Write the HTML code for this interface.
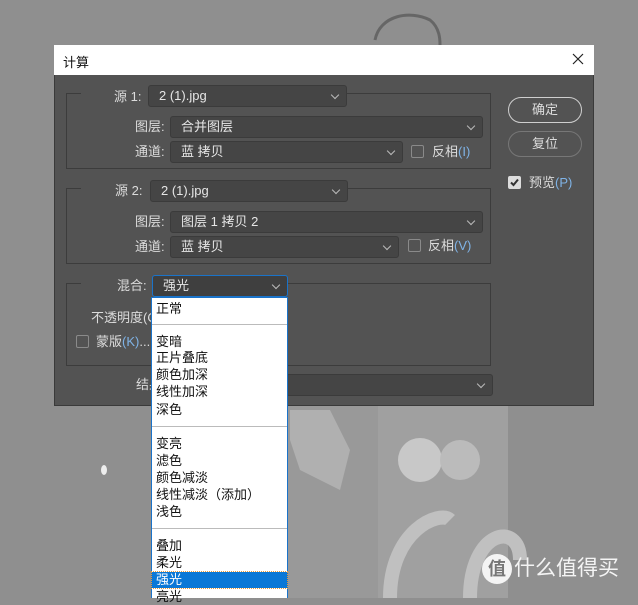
<!DOCTYPE html>
<html><head><meta charset="utf-8"><style>
*{margin:0;padding:0;box-sizing:border-box}
body{width:638px;height:598px;overflow:hidden;background:#8f8f8f;position:relative;font-family:"Liberation Sans","Noto Sans CJK SC",sans-serif;font-size:13px;color:#dcdcdc}
.a{position:absolute}
.dlg{left:54px;top:45px;width:540px;height:361px;background:#535353;border:1px solid #3a3a3a}
.tb{left:54px;top:45px;width:540px;height:30px;background:#fff;color:#111}
.sel{position:absolute;height:22px;background:#454545;border:1px solid #3b3b3b;border-radius:3px;padding-left:10px;line-height:20px;color:#e6e6e6}
.sel:after{content:"";position:absolute;right:8px;top:6px;width:5px;height:5px;border-right:1px solid #bbb;border-bottom:1px solid #bbb;transform:rotate(45deg)}
.grp{position:absolute;border:1px solid #3c3c3c}
.lbl{position:absolute;line-height:16px}
.cb{position:absolute;width:13px;height:13px;border:1px solid #8a8a8a;border-radius:2px}
.btn{position:absolute;width:74px;height:26px;border-radius:13px;text-align:center;line-height:23px}
.b{color:#7fb3e6}
.list{left:151px;top:297px;width:137px;height:301px;background:#fff;border:1px solid #1a73c9;border-bottom:none;color:#111}
.it{position:absolute;left:4px;line-height:16px}
.sp{position:absolute;left:0;width:135px;height:1px;background:#bbb}
</style></head><body>
<svg class="a" style="left:0;top:0" width="638" height="598">
<path d="M375 40 C380 15 410 10 430 20 440 28 440 40 440 45" stroke="#666" stroke-width="3" fill="none"/>
<rect x="288" y="406" width="110" height="192" fill="#999"/>
<rect x="378" y="406" width="130" height="192" fill="#a0a0a0"/>
<path d="M290 410 L330 410 350 450 340 490 300 470 290 440Z" fill="#b0b0b0"/>
<circle cx="420" cy="460" r="22" fill="#c8c8c8"/>
<circle cx="460" cy="460" r="20" fill="#bbb"/>
<path d="M390 598 C390 530 440 510 450 520" stroke="#c0c0c0" stroke-width="14" fill="none"/>
<path d="M470 598 C470 530 520 520 520 560" stroke="#c0c0c0" stroke-width="14" fill="none"/>
<ellipse cx="104" cy="470" rx="3" ry="5" fill="#eee"/>
<circle cx="497" cy="569" r="15" fill="#f4f4f4"/>
</svg>
<div class="a" style="left:488px;top:558px;font-size:18px;line-height:22px;color:#777;font-weight:bold">值</div>
<div class="a" style="left:514px;top:557px;font-size:21px;line-height:24px;color:#f4f4f4">什么值得买</div>
<div class="a dlg"></div>
<div class="a tb"><span class="a" style="left:9px;top:7px">计算</span>
<svg class="a" style="left:517px;top:7px" width="14" height="14"><path d="M2 2L12 12M12 2L2 12" stroke="#222" stroke-width="1.2"/></svg></div>
<div class="grp" style="left:66px;top:93px;width:425px;height:76px"></div>
<div class="a" style="left:81px;top:88px;width:264px;height:10px;background:#535353"></div>
<div class="lbl" style="left:114px;top:89px">源 1:</div>
<div class="sel" style="left:148px;top:85px;width:199px">2 (1).jpg</div>
<div class="lbl" style="left:135px;top:119px">图层:</div>
<div class="sel" style="left:170px;top:116px;width:313px">合并图层</div>
<div class="lbl" style="left:135px;top:144px">通道:</div>
<div class="sel" style="left:170px;top:141px;width:233px">蓝 拷贝</div>
<div class="cb" style="left:411px;top:145px"></div>
<div class="lbl" style="left:432px;top:144px">反相<span class="b">(I)</span></div>
<div class="grp" style="left:66px;top:188px;width:425px;height:76px"></div>
<div class="a" style="left:81px;top:183px;width:267px;height:10px;background:#535353"></div>
<div class="lbl" style="left:115px;top:183px">源 2:</div>
<div class="sel" style="left:150px;top:180px;width:198px">2 (1).jpg</div>
<div class="lbl" style="left:135px;top:214px">图层:</div>
<div class="sel" style="left:170px;top:211px;width:313px">图层 1 拷贝 2</div>
<div class="lbl" style="left:135px;top:239px">通道:</div>
<div class="sel" style="left:170px;top:236px;width:229px">蓝 拷贝</div>
<div class="cb" style="left:408px;top:239px"></div>
<div class="lbl" style="left:428px;top:238px">反相<span class="b">(V)</span></div>
<div class="grp" style="left:66px;top:283px;width:425px;height:83px"></div>
<div class="a" style="left:81px;top:278px;width:207px;height:10px;background:#535353"></div>
<div class="lbl" style="left:117px;top:278px">混合:</div>
<div class="sel" style="left:152px;top:275px;width:136px;border-color:#1a73c9;background:#3f3f3f">强光</div>
<div class="lbl" style="left:91px;top:310px">不透明度(O</div>
<div class="cb" style="left:76px;top:335px"></div>
<div class="lbl" style="left:96px;top:334px">蒙版<span class="b">(K)</span>...</div>
<div class="lbl" style="left:136px;top:377px">结果</div>
<div class="sel" style="left:286px;top:374px;width:207px"></div>
<div class="btn" style="left:508px;top:97px;border:1px solid #cfcfcf">确定</div>
<div class="btn" style="left:508px;top:131px;border:1px solid #777">复位</div>
<div class="a" style="left:508px;top:176px;width:13px;height:13px;background:#ddd;border-radius:2px"></div>
<svg class="a" style="left:508px;top:176px" width="13" height="13"><path d="M3 6.5L5.5 9L10 3.5" stroke="#333" stroke-width="2" fill="none"/></svg>
<div class="lbl" style="left:529px;top:175px">预览<span class="b">(P)</span></div>
<div class="a list">
<div class="it" style="top:3px">正常</div><div class="sp" style="top:26px"></div>
<div class="it" style="top:36px">变暗</div><div class="it" style="top:52px">正片叠底</div><div class="it" style="top:69px">颜色加深</div><div class="it" style="top:86px">线性加深</div><div class="it" style="top:104px">深色</div>
<div class="sp" style="top:128px"></div>
<div class="it" style="top:138px">变亮</div><div class="it" style="top:155px">滤色</div><div class="it" style="top:172px">颜色减淡</div><div class="it" style="top:189px">线性减淡（添加）</div><div class="it" style="top:206px">浅色</div>
<div class="sp" style="top:230px"></div>
<div class="it" style="top:240px">叠加</div><div class="it" style="top:257px">柔光</div>
<div class="a" style="left:0;top:274px;width:135px;height:16px;background:#0a78d7;outline:1px dotted #e89a3c"></div>
<div class="it" style="top:274px;color:#fff">强光</div><div class="it" style="top:291px">亮光</div>
</div>
</body></html>
